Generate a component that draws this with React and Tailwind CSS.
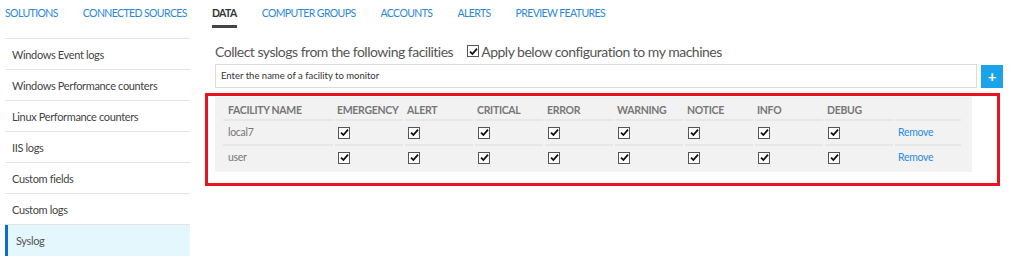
import React from 'react';

const tabs = ['SOLUTIONS', 'CONNECTED SOURCES', 'DATA', 'COMPUTER GROUPS', 'ACCOUNTS', 'ALERTS', 'PREVIEW FEATURES'];

const sideItems = [
  'Windows Event logs',
  'Windows Performance counters',
  'Linux Performance counters',
  'IIS logs',
  'Custom fields',
  'Custom logs',
  'Syslog',
];

const levels = ['EMERGENCY', 'ALERT', 'CRITICAL', 'ERROR', 'WARNING', 'NOTICE', 'INFO', 'DEBUG'];
const facilities = ['local7', 'user'];

function Check({ className = '' }) {
  return (
    <span className={`inline-flex items-center justify-center w-[12px] h-[12px] border border-[#555] bg-white ${className}`}>
      <svg width="9" height="9" viewBox="0 0 9 9">
        <path d="M1 4.6 L3.4 7 L8 1.6" fill="none" stroke="#111" strokeWidth="1.8" />
      </svg>
    </span>
  );
}

export default function App() {
  const font = { fontFamily: 'Lato, "Open Sans", sans-serif' };
  const cols = 'grid grid-cols-[112px_repeat(8,70px)_68px]';
  const line = 'border-b-2 border-[#e7e7e7]';

  return (
    <div className="w-[1024px] h-[277px] bg-white overflow-hidden" style={font}>
      {/* top tabs */}
      <div className="flex items-start h-[38px] pl-[5px] gap-[25px] text-[10.5px] tracking-[-0.6px] text-[#2a88d8]">
        {tabs.map((t) => (
          <div key={t} className="flex flex-col items-stretch pt-[6px]">
            <span className={t === 'DATA' ? 'font-bold text-[#333]' : ''}>{t}</span>
            {t === 'DATA' && <span className="mt-[3px] h-[3px] bg-[#444]" />}
          </div>
        ))}
      </div>

      <div className="flex">
        {/* sidebar */}
        <div className="ml-[5px] w-[185px] border-t border-[#e4e4e4] text-[11px] tracking-[-0.35px]">
          {sideItems.map((s) => (
            <div
              key={s}
              className={
                s === 'Syslog'
                  ? 'h-[31px] flex items-center pl-[8px] pt-[1px] border-l-[3px] border-[#0a6ed1] bg-[#e3f7fc] text-[#555]'
                  : 'h-[31px] flex items-center pl-[7px] pt-[2px] border-b border-[#e4e4e4] text-[#444]'
              }
            >
              {s}
            </div>
          ))}
        </div>

        {/* main */}
        <div className="ml-[25px] w-[788px]">
          <div className="flex items-center h-[26px] text-[14px] tracking-[-0.5px] text-[#555]">
            <span>Collect syslogs from the following facilities</span>
            <span className="ml-[14px] flex items-center">
              <Check className="mr-[2px]" />
              Apply below configuration to my machines
            </span>
          </div>
          <div className="flex items-center gap-[4px]">
            <div className="w-[762px] h-[24px] border border-[#dcdcdc] flex items-center pl-[5px] text-[9.5px] text-[#333]">
              Enter the name of a facility to monitor
            </div>
            <div className="w-[22px] h-[23px] bg-[#1aa3e8] text-white flex items-center justify-center text-[15px] font-bold leading-none">
              +
            </div>
          </div>

          {/* highlighted table */}
          <div className="mt-[5px] -ml-[10px] w-[795px] h-[93px] border-[3px] border-[#e8141f] pl-[7px] pt-[1px]">
            <div className="w-[757px] bg-[#f2f2f2] pl-[8px] pt-[3px] pb-[3px] text-[10.5px] tracking-[-0.3px] text-[#777]">
              <div className={`${cols} h-[21px]`}>
                <div className={`mr-[2px] pl-[5px] pt-[2px] ${line} font-bold flex items-center`}>FACILITY NAME</div>
                {levels.map((l) => (
                  <div key={l} className={`mr-[2px] pl-[2px] pt-[2px] ${line} font-bold flex items-center`}>{l}</div>
                ))}
                <div className={`mr-[2px] ${line}`} />
              </div>
              {facilities.map((f, i) => (
                <div key={f} className={`${cols} ${i === 0 ? 'h-[25px]' : 'h-[23px]'}`}>
                  <div className={`mr-[2px] pl-[5px] flex items-center ${i === 0 ? line : ''}`}>{f}</div>
                  {levels.map((l) => (
                    <div key={l} className={`mr-[2px] pl-[3px] flex items-center ${i === 0 ? line : ''}`}>
                      <Check />
                    </div>
                  ))}
                  <div className={`mr-[2px] pl-[3px] flex items-center text-[#2d8be0] ${i === 0 ? line : ''}`}>Remove</div>
                </div>
              ))}
            </div>
          </div>
        </div>
      </div>
    </div>
  );
}
